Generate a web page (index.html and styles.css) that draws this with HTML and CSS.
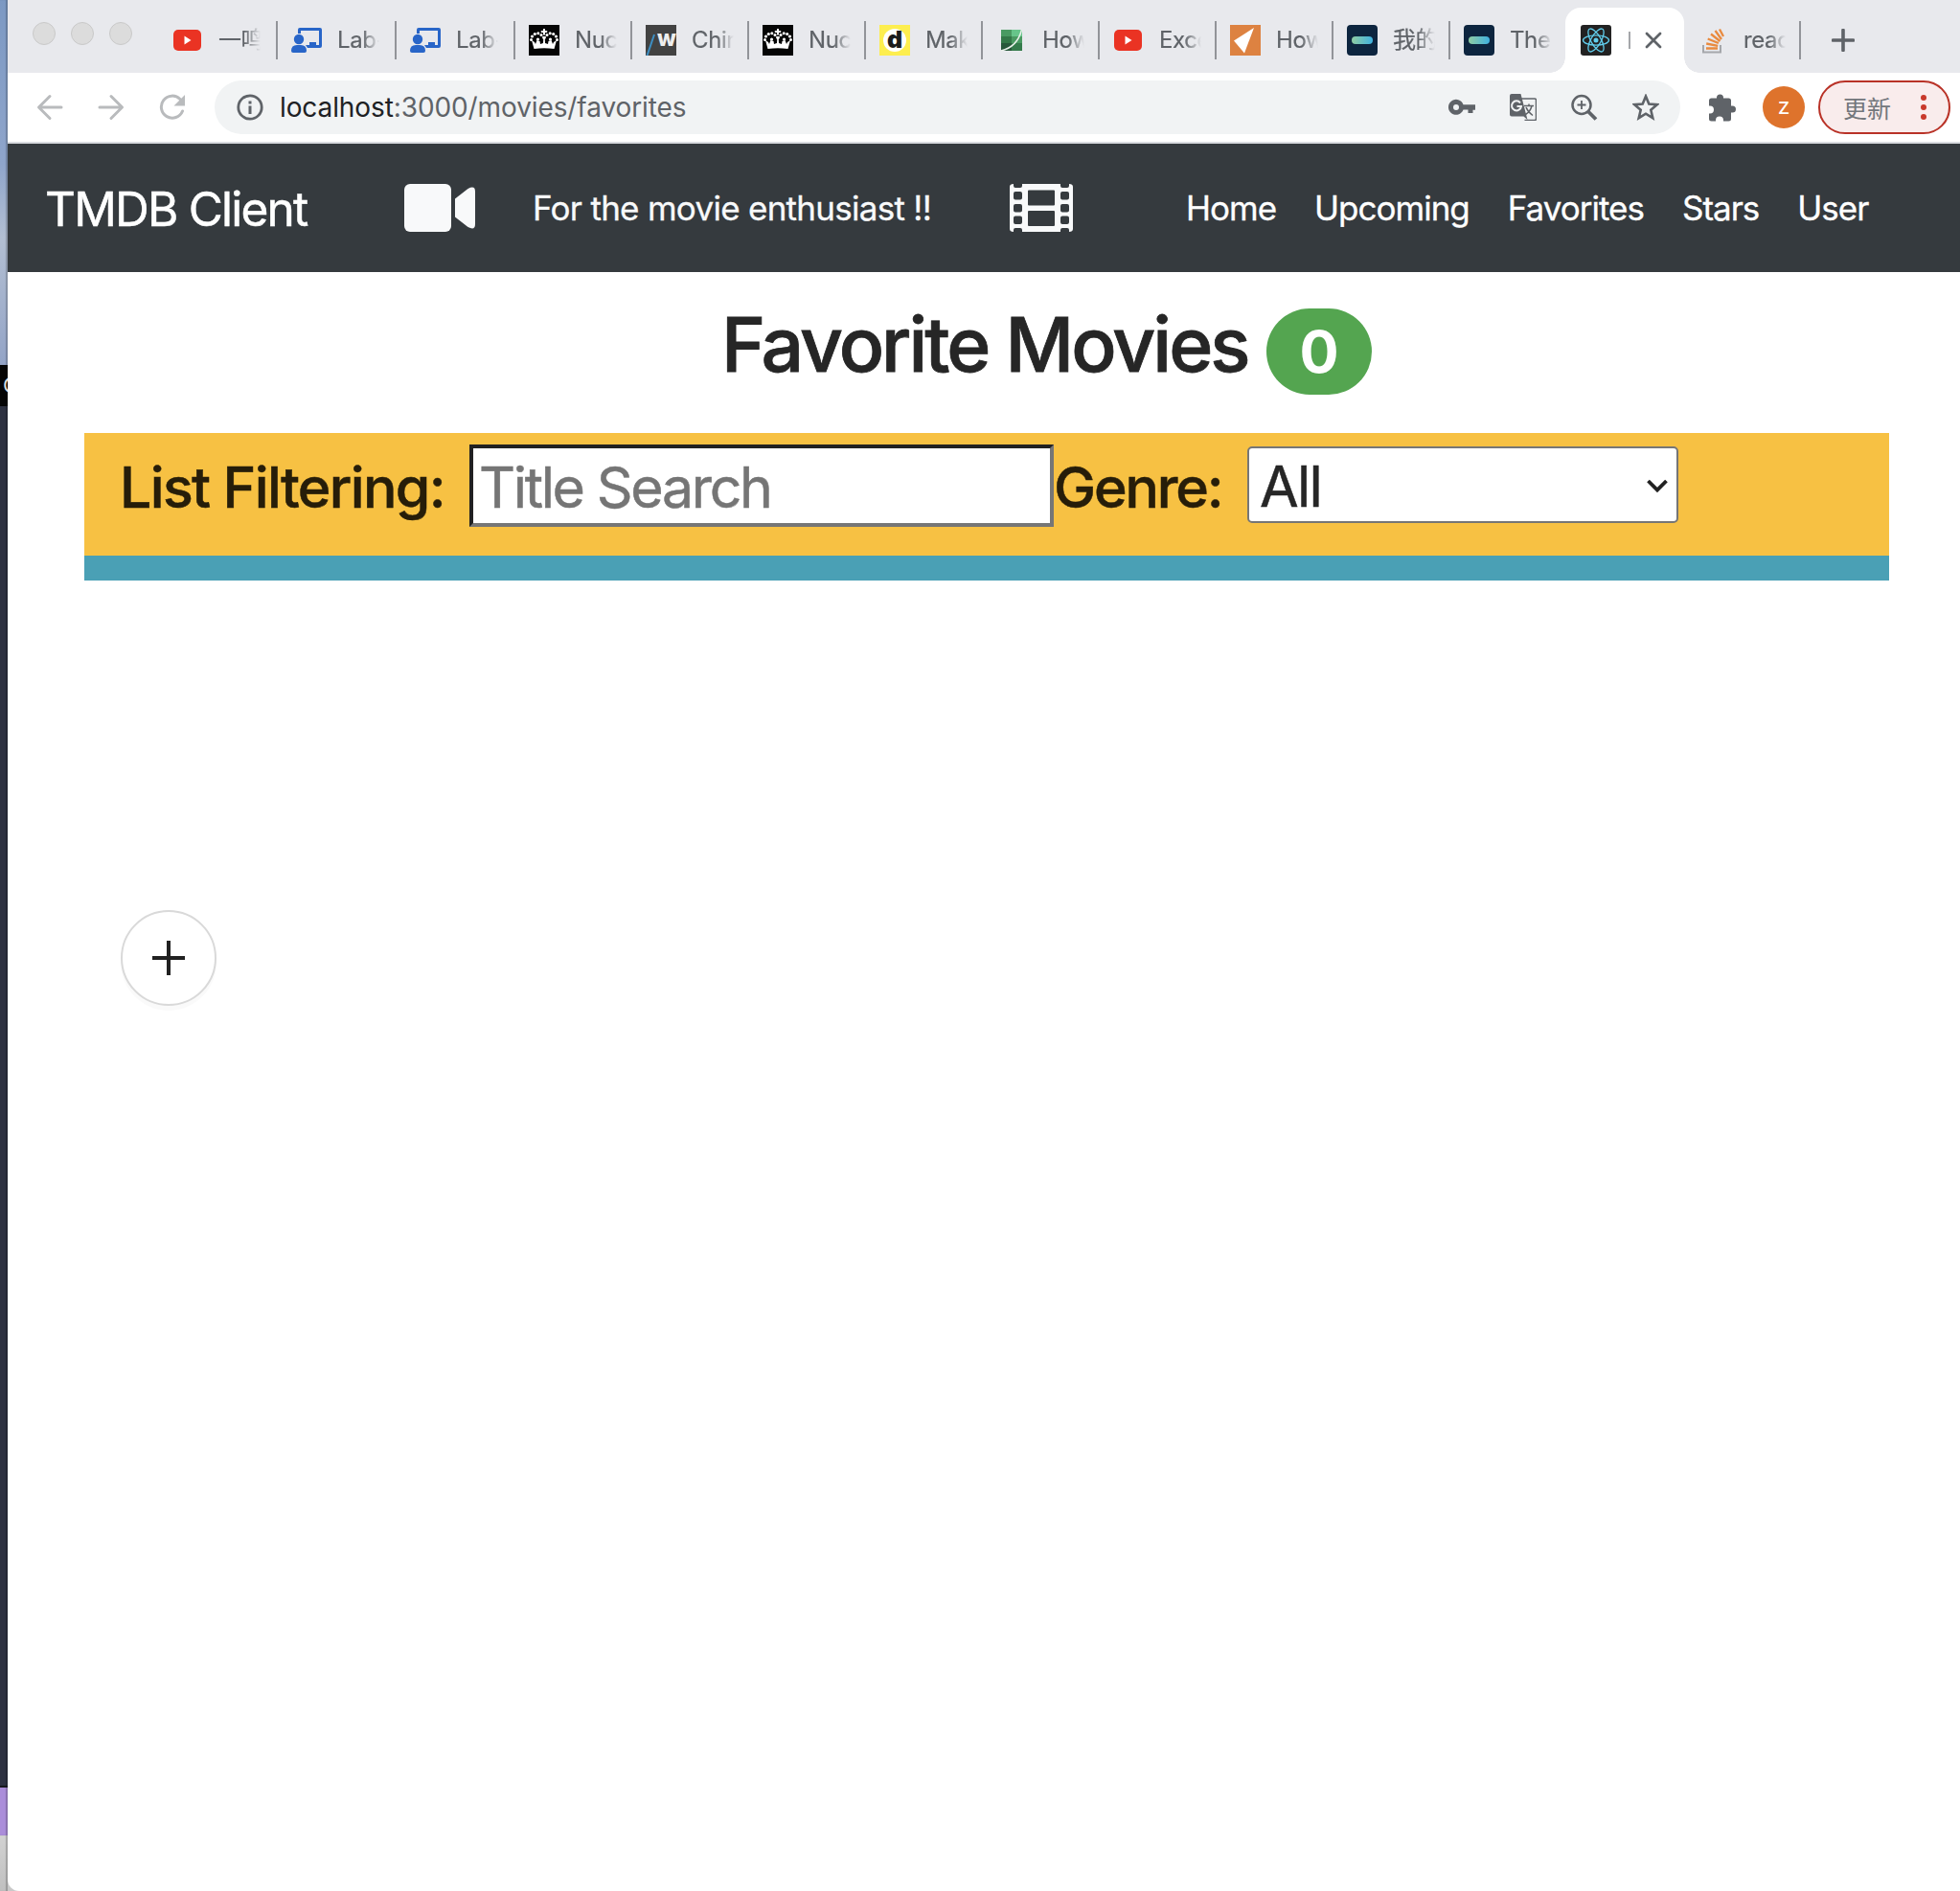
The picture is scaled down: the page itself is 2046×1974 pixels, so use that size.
FILE: index.html
```html
<!DOCTYPE html>
<html lang="en">
<head>
<meta charset="utf-8">
<title>Favorite Movies</title>
<link rel="stylesheet" href="styles.css">
</head>
<body>
<svg class="defs" width="0" height="0" aria-hidden="true">
  <symbol id="youtube" viewBox="0 0 32 32"><rect x="1" y="5" width="29" height="22" rx="5" fill="#ea3323"/><path d="M12.500 11.500v9l7-4.500z" fill="#fff"/></symbol>
  <symbol id="lab" viewBox="0 0 32 32"><g fill="#2865c8"><path d="M7 5q0-2 2-2h21q2 0 2 2v17q0 2-2 2H17l-2-3h4v-3h7v3h3V6H10v3H7z"/><circle cx="8" cy="15" r="5.200"/><path d="M0 27q0-6 6-6h4q6 0 6 6 0 2-2 2H2q-2 0-2-2z"/></g></symbol>
  <symbol id="crown" viewBox="0 0 32 32"><rect width="32" height="32" fill="#050505"/><g fill="#fff"><path d="M5.500 25 3 16l3 2 1 2 1.500-4 3 1 .5 3 3-1 .2-4-1-1v-2h3.600v2l-1 1 .2 4 3 1 .5-3 3-1 1.500 4 1-2 3-2-2.500 9Q16 23.500 5.500 25z"/><path d="M15 4h2v2h2.200v2H17v2.500h-2V8h-2.200V6H15z"/><circle cx="2.500" cy="15.500" r="1.500"/><circle cx="3.500" cy="12" r="1.600"/><circle cx="6.300" cy="9.500" r="1.600"/><circle cx="9.800" cy="8.700" r="1.500"/><circle cx="13" cy="10.400" r="1.500"/><circle cx="29.500" cy="15.500" r="1.500"/><circle cx="28.500" cy="12" r="1.600"/><circle cx="25.700" cy="9.500" r="1.600"/><circle cx="22.200" cy="8.700" r="1.500"/><circle cx="19" cy="10.400" r="1.500"/><circle cx="9.500" cy="15" r="1.600"/><circle cx="22.500" cy="15" r="1.600"/></g></symbol>
  <symbol id="tmdb" viewBox="0 0 32 32"><linearGradient id="tg"><stop stop-color="#8fcca2"/><stop offset="1" stop-color="#3fb1df"/></linearGradient><rect width="32" height="32" rx="4" fill="#0d253f"/><rect x="5" y="12" width="22" height="8" rx="4" fill="url(#tg)"/></symbol>
</svg>
<div class="desktop"><span class="desk-sky"></span><span class="desk-black">C</span><span class="desk-dark"></span><span class="desk-purple"></span><span class="desk-gray"></span></div>
<div class="window">
  <div class="tabstrip">
    <div class="lights"><i></i><i></i><i></i></div>
    <div class="tab wide"><svg class="fav"><use href="#youtube"/></svg><span class="t">一鸣</span></div>
    <div class="tab wide"><svg class="fav"><use href="#lab"/></svg><span class="t">Lab-</span></div>
    <div class="tab wide"><svg class="fav"><use href="#lab"/></svg><span class="t">Lab-</span></div>
    <div class="tab"><svg class="fav"><use href="#crown"/></svg><span class="t">Nuc</span></div>
    <div class="tab"><span class="fav fav-w"><svg class="slash" viewBox="0 0 32 32"><path d="M1.500 32 9 10" stroke="#3d8fc4" stroke-width="2"/></svg>w</span><span class="t">Chin</span></div>
    <div class="tab"><svg class="fav"><use href="#crown"/></svg><span class="t">Nuc</span></div>
    <div class="tab"><span class="fav fav-d"><b>d</b></span><span class="t">Mak</span></div>
    <div class="tab"><svg class="fav" viewBox="0 0 32 32"><path d="M5 5h22v22H5z" fill="#4a9a62"/><path d="M16 5h11v7H16z" fill="#67c58a"/><path d="M5 12h11v7H5z" fill="#347848"/><path d="M5 19h11v8H5z" fill="#28583a"/><path d="M16 19h11v8H16z" fill="#357b4c"/><path d="M5 27Q22 23 26.500 5" fill="none" stroke="#e9f1ea" stroke-width="1.500"/></svg><span class="t">How</span></div>
    <div class="tab"><svg class="fav"><use href="#youtube"/></svg><span class="t">Exce</span></div>
    <div class="tab"><svg class="fav" viewBox="0 0 32 32"><path d="M0 0h32v32H0z" fill="#dd8241"/><path d="M25 3 4 16.500 15 29.500z" fill="#fff"/></svg><span class="t">How</span></div>
    <div class="tab"><svg class="fav"><use href="#tmdb"/></svg><span class="t">我的</span></div>
    <div class="tab before"><svg class="fav"><use href="#tmdb"/></svg><span class="t">The</span></div>
    <div class="tab active"><svg class="fav" viewBox="0 0 32 32"><rect width="32" height="32" rx="3" fill="#222"/><g fill="none" stroke="#61cdec" stroke-width="1.300"><ellipse cx="16" cy="16" rx="13.500" ry="5.200"/><ellipse cx="16" cy="16" rx="13.500" ry="5.200" transform="rotate(60 16 16)"/><ellipse cx="16" cy="16" rx="13.500" ry="5.200" transform="rotate(120 16 16)"/></g><circle cx="16" cy="16" r="2.500" fill="#61cdec"/></svg><i class="bar"></i><svg class="close" viewBox="0 0 18 18"><path d="m2 2 14 14M16 2 2 16" stroke="#5f6368" stroke-width="2.800" stroke-linecap="round"/></svg></div>
    <div class="tab"><svg class="fav" viewBox="0 0 32 32"><path d="M6 21v7.500h18V21" fill="none" stroke="#a5a7ab" stroke-width="2"/><g stroke="#e98a3f" stroke-width="2.300"><path d="M9 24.500h12M9.200 19.500l12 2.300M10.700 14.500l11.200 4.500M14 9.500l9.500 7.500M18.500 6l6.500 9M23 4.500 27 12"/></g></svg><span class="t">reac</span></div>
    <svg class="newtab" viewBox="0 0 24 24"><path d="M12 1.500v21M1.500 12h21" stroke="#5f6368" stroke-width="3.600" stroke-linecap="round"/></svg>
  </div>
  <div class="toolbar">
    <svg class="nav" viewBox="0 0 28 28"><path d="M26 14H3M14 2.500 2.500 14 14 25.500"/></svg>
    <svg class="nav" viewBox="0 0 28 28"><path d="M2 14h23M14 2.500 25.500 14 14 25.500"/></svg>
    <svg class="nav reload" viewBox="0 0 28 28"><path d="M24.500 18A11.500 11.500 0 1 1 22 5.500"/><path d="M27 1v11.500H15.500z" class="solid"/></svg>
    <div class="omnibox">
      <svg class="info" viewBox="0 0 28 28"><circle cx="14" cy="14" r="12.200" fill="none" stroke="#5f6368" stroke-width="2.800"/><path d="M12.500 12.500h3V21h-3zM12.500 7.500h3v3h-3z" fill="#5f6368"/></svg>
      <span class="url"><b>localhost</b>:3000/movies/favorites</span>
      <svg class="oi" viewBox="0 0 28 28"><path d="M15.500 11.200h12.500v5.500h-2.500V20h-5v-3.500h-5A8 8 0 1 1 15.500 11.200z" fill="#5f6368"/><circle cx="8" cy="14" r="3" fill="#f1f3f4"/></svg>
      <svg class="oi" viewBox="0 0 28 28"><path d="M12 5h14q1.500 0 1.500 1.500v19.500q0 1.500-1.500 1.500H15.500" fill="none" stroke="#5f6368" stroke-width="1.500"/><path d="M2 0h9.500l7 27-4-3.500H2q-2 0-2-2V2q0-2 2-2z" fill="#5f6368"/><path d="M11 9.300A5 5 0 1 0 12 13H7.500" fill="none" stroke="#f1f3f4" stroke-width="2"/><path d="M15 12.500h10M20 10.500v2M23 12.500q-1.500 6-6.500 9M17 14q2 5 7 8.500" fill="none" stroke="#5f6368" stroke-width="1.500"/></svg>
      <svg class="oi" viewBox="0 0 28 28"><circle cx="11" cy="11.500" r="9.500" fill="none" stroke="#5f6368" stroke-width="2.500"/><path d="M17.500 18 26 26.500" stroke="#5f6368" stroke-width="3.800"/><path d="M11 7v9M6.500 11.500h9" stroke="#5f6368" stroke-width="1.800"/></svg>
      <svg class="oi" viewBox="0 0 28 28"><path d="m14 2.500 3.300 8 8.500.700-6.500 5.600 2 8.400L14 20.700l-7.300 4.500 2-8.400-6.500-5.600 8.500-.7z" fill="none" stroke="#5f6368" stroke-width="2.600"/></svg>
    </div>
    <svg class="puzzle" viewBox="0 0 28 28"><path d="M0 6.500Q0 4 2.500 4H8V3.500a3.500 3.500 0 0 1 7 0V4h5.500Q23 4 23 6.500V12h1.500a3.500 3.500 0 0 1 0 7H23v6.500q0 2.500-2.500 2.500H15v-1a4 4 0 0 0-8 0v1H2.500Q0 28 0 25.500V20h1a4 4 0 0 0 0-8H0z" fill="#5f6368"/></svg>
    <div class="avatar">z</div>
    <div class="update"><span>更新</span><svg viewBox="0 0 6 26"><g fill="#c8392b"><circle cx="3" cy="3" r="3"/><circle cx="3" cy="13" r="3"/><circle cx="3" cy="23" r="3"/></g></svg></div>
  </div>
  <header class="navbar">
    <span class="brand">TMDB Client</span>
    <svg class="video" viewBox="0 0 74 50"><rect width="49" height="50" rx="6"/><path d="M53 15.500 66.500 5Q74 1 74 8v34q0 7-7.500 3L53 34.500z"/></svg>
    <span class="tagline">For the movie enthusiast !!</span>
    <svg class="film" viewBox="0 0 66 50"><path fill-rule="evenodd" d="M0 3Q0 0 4 0v2q0 2 2 2h5q2 0 2-2V0h40v2q0 2 2 2h5q2 0 2-2V0q4 0 4 3v44q0 3-4 3v-2q0-2-2-2h-5q-2 0-2 2v2H13v-2q0-2-2-2H6q-2 0-2 2v2q-4 0-4-3zM6 8q-2 0-2 2v4.500q0 2 2 2h5q2 0 2-2V10q0-2-2-2zM6 21q-2 0-2 2v4.500q0 2 2 2h5q2 0 2-2V23q0-2-2-2zM6 33.500q-2 0-2 2V40q0 2 2 2h5q2 0 2-2v-4.500q0-2-2-2zM55 8q-2 0-2 2v4.500q0 2 2 2h5q2 0 2-2V10q0-2-2-2zM55 21q-2 0-2 2v4.500q0 2 2 2h5q2 0 2-2V23q0-2-2-2zM55 33.500q-2 0-2 2V40q0 2 2 2h5q2 0 2-2v-4.500q0-2-2-2zM20 6.500q-1 0-1 1v14q0 1 1 1h26q1 0 1-1v-14q0-1-1-1zM20 28q-1 0-1 1v14q0 1 1 1h26q1 0 1-1V29q0-1-1-1z"/></svg>
    <nav><a>Home</a><a>Upcoming</a><a>Favorites</a><a>Stars</a><a>User</a></nav>
  </header>
  <main>
    <h2><span class="title">Favorite Movies</span><span class="badge">0</span></h2>
    <form class="filters">
      <label class="lf">List Filtering:</label>
      <input type="text" placeholder="Title Search">
      <label class="genre">Genre:</label>
      <div class="select"><span>All</span><svg viewBox="0 0 24 14"><path d="m2.500 2 9.500 9.500L21.500 2" fill="none" stroke="#212121" stroke-width="3.800"/></svg></div>
    </form>
    <button class="fab" type="button"><svg viewBox="0 0 36 36"><path d="M18 0v36M1 18h34" stroke="#212121" stroke-width="4"/></svg></button>
  </main>
</div>
</body>
</html>
```
FILE: styles.css
```css
* { box-sizing: border-box; }
body {
  margin: 0;
  width: 2046px;
  height: 1974px;
  display: flex;
  overflow: hidden;
  background: linear-gradient(#fff 90%, #c9c9c9 98%);
  font-family: Inter, "Noto Sans CJK SC", sans-serif;
  color: #262626;
}
.defs { position: absolute; }
svg { display: block; flex: none; }

.desktop { width: 8px; flex: none; display: flex; flex-direction: column; }
.desktop span { display: block; width: 8px; box-shadow: inset -2px 0 1px rgba(0,0,0,.2); }
.desk-sky { height: 381px; background: linear-gradient(#7c99c3, #8fa5cb 45%, #b3bfd2 65%, #93a4c7); }
.desk-black { height: 43px; background: #050505; color: #ddd; font-size: 22px; line-height: 43px; overflow: hidden; text-indent: 3px; }
.desk-dark { height: 1442px; background: #2d3141; border-bottom: 2px solid #17181c; }
.desk-purple { height: 50px; background: #ab8dda; }
.desk-gray { height: 58px; background: linear-gradient(#d2d2d2, #c0c0c0); }

.window { flex: 1; min-width: 0; background: #fff; border-bottom-left-radius: 12px; overflow: hidden; }

.tabstrip { height: 76px; display: flex; align-items: flex-end; background: #e8e9ed; }
.lights { display: flex; gap: 16px; width: 158px; padding-left: 26px; align-self: flex-start; margin-top: 23px; }
.lights i { width: 24px; height: 24px; border-radius: 50%; background: #dcdcdc; border: 1px solid #c9c9c9; }
.tab { width: 122px; height: 68px; flex: none; display: flex; align-items: center; padding: 0 0 0 14px; position: relative; }
.tab.wide { width: 124px; }
.tab::after { content: ""; width: 2px; height: 40px; background: #929499; margin-left: auto; }
.tab.before { width: 120px; }
.tab.before::after, .tab.active::after { display: none; }
.fav { width: 32px; height: 32px; flex: none; }
.t { width: 44px; margin-left: 16px; overflow: hidden; white-space: nowrap; font-size: 24px; letter-spacing: -.4px; line-height: 34px; color: #5f6368; -webkit-text-stroke: .2px; mask-image: linear-gradient(90deg, #000 60%, transparent); }
.fav-w { background: #424242; color: #eee; font: 800 23px/29px Inter, sans-serif; padding-left: 12px; letter-spacing: -1px; position: relative; overflow: hidden; }
.slash { position: absolute; left: 0; top: 0; width: 32px; height: 32px; }
.fav-d { background: #fdee4f; padding: 4px; }
.fav-d b { display: block; width: 24px; height: 24px; border-radius: 50%; background: #fff; color: #1b1b1b; font: 900 25px/22px Inter, sans-serif; text-align: center; }
.active { width: 124px; background: #fff; border-radius: 16px 16px 0 0; padding-left: 16px; }
.active::before { content: ""; position: absolute; left: -16px; right: -16px; bottom: 0; height: 16px; background: radial-gradient(circle at 0 0, transparent 15.500px, #fff 16px) 0 0 / 16px 16px no-repeat, radial-gradient(circle at 100% 0, transparent 15.500px, #fff 16px) 100% 0 / 16px 16px no-repeat; }
.bar { width: 2px; height: 18px; background: #a5a7aa; margin-left: 18px; }
.close { width: 18px; height: 18px; margin-left: 15px; }
.newtab { width: 24px; height: 24px; margin-left: 32px; align-self: flex-start; margin-top: 30px; }

.toolbar { height: 74px; display: flex; align-items: center; padding-left: 30px; border-bottom: 2px solid #dadce0; }
.nav { width: 28px; height: 28px; margin-right: 36px; fill: none; stroke: #b9bbbd; stroke-width: 3; stroke-linecap: round; stroke-linejoin: round; }
.nav .solid { fill: #b9bbbd; stroke: none; }
.omnibox { width: 1530px; height: 56px; margin-left: -6px; border-radius: 28px; background: #f1f3f4; display: flex; align-items: center; padding-left: 23px; }
.info { width: 28px; height: 28px; }
.url { width: 1220px; flex: none; margin-left: 17px; font-size: 28px; letter-spacing: -.1px; color: #5f6368; white-space: nowrap; }
.url b { font-weight: 400; color: #202124; }
.oi { width: 28px; height: 28px; margin-right: 36px; }
.oi:last-child { margin-right: 0; }
.puzzle { width: 28px; height: 29px; margin-left: 30px; }
.avatar { width: 44px; height: 44px; border-radius: 50%; background: #de732c; color: #fff; margin-left: 28px; font-size: 23px; line-height: 43px; text-align: center; }
.update { width: 138px; height: 56px; margin-left: 14px; border: 2px solid #b93227; border-radius: 28px; background: #f9ecec; display: flex; align-items: center; padding-left: 24px; }
.update span { width: 81px; font-size: 25px; color: #73777c; padding-bottom: 1px; }
.update svg { width: 6px; height: 26px; }

.navbar { height: 134px; background: #353a3e; color: #fff; display: flex; align-items: center; padding-left: 39px; white-space: nowrap; }
.brand { width: 375px; font-size: 49.500px; letter-spacing: -1.800px; line-height: 64px; padding-top: 2px; -webkit-text-stroke: .5px; }
.video { width: 74px; height: 50px; fill: #f8f9fa; }
.tagline { width: 498px; margin-left: 60px; font-size: 35px; letter-spacing: -.720px; color: #f8f9fa; -webkit-text-stroke: .3px; }
.film { width: 66px; height: 50px; fill: #f8f9fa; }
.navbar nav { display: flex; gap: 40px; margin-left: 118px; font-size: 35px; letter-spacing: -1px; -webkit-text-stroke: .3px; }

h2 { margin: 0; height: 168px; display: flex; padding: 38px 0 0 745px; font-weight: 500; }
.title { width: 569px; font-size: 78.500px; letter-spacing: -2.950px; line-height: 75px; white-space: nowrap; -webkit-text-stroke: .8px; }
.badge { width: 110px; height: 90px; border-radius: 45px; background: #54a550; color: #fff; font-size: 61px; font-weight: 700; line-height: 90px; text-align: center; }
.filters { width: 1884px; height: 154px; margin-left: 80px; background: #f7c143; border-bottom: 26px solid #4aa0b5; display: flex; padding: 12px 0 0 37px; font-size: 59px; font-weight: 500; line-height: 90px; color: #261d09; white-space: nowrap; }
.lf { width: 365px; letter-spacing: -1.650px; -webkit-text-stroke: .5px; }
.filters input { width: 610px; height: 86px; border: 4px solid; border-color: #212121 #767676 #767676 #212121; border-radius: 0; background: #fff; padding: 3px 6px 0; font: 400 59px Inter, sans-serif; letter-spacing: -2.350px; color: #262626; outline: none; }
.filters input::placeholder { color: #757575; opacity: 1; -webkit-text-stroke: .5px; }
.genre { width: 202px; letter-spacing: -2.150px; -webkit-text-stroke: .5px; }
.select { width: 450px; height: 80px; margin-top: 2px; border: 2px solid #767676; border-radius: 5px; background: #fff; color: #262626; font-weight: 400; line-height: 80px; display: flex; align-items: center; justify-content: space-between; padding: 2px 8px 0 11px; }
.select span { letter-spacing: -1.800px; -webkit-text-stroke: .5px; padding-top: 1px; }
.select svg { width: 24px; height: 14px; }
.fab { display: flex; align-items: center; justify-content: center; width: 100px; height: 100px; margin: 344px 0 0 118px; padding: 0; border: 2px solid #d9d9d9; border-radius: 50%; background: #fff; box-shadow: 0 5px 0 rgba(0,0,0,.02); }
.fab svg { width: 36px; height: 36px; }
```
